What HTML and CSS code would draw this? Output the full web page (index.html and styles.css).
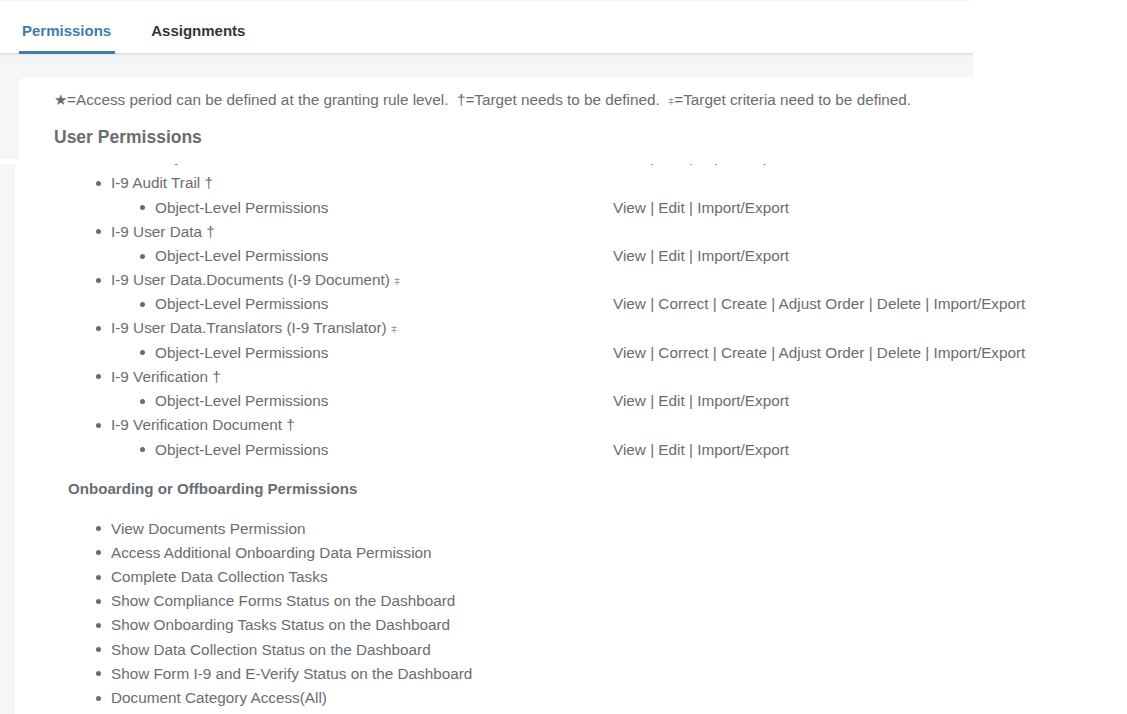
FILE: index.html
```html
<!DOCTYPE html>
<html lang="en">
<head>
<meta charset="utf-8">
<title>Permissions</title>
<link rel="stylesheet" href="styles.css">
</head>
<body>
<section class="top">
  <nav class="tabs">
    <div class="tab active">Permissions</div>
    <div class="tab">Assignments</div>
  </nav>
  <div class="card">
    <p class="legend">★=Access period can be defined at the granting rule level.&nbsp; †=Target needs to be defined.&nbsp; <span class="sym">⧧</span>=Target criteria need to be defined.</p>
    <h2 class="title">User Permissions</h2>
  </div>
</section>
<section class="lower">
  <div class="strip"></div>
  <div class="content">
    <div class="list">
      <div class="row l2 cut"><span class="label">Object-Level Permissions</span><span class="ops">View | Edit | Import/Export</span></div>
      <div class="row l1"><span class="label">I-9 Audit Trail †</span></div>
      <div class="row l2"><span class="label">Object-Level Permissions</span><span class="ops">View | Edit | Import/Export</span></div>
      <div class="row l1"><span class="label">I-9 User Data †</span></div>
      <div class="row l2"><span class="label">Object-Level Permissions</span><span class="ops">View | Edit | Import/Export</span></div>
      <div class="row l1"><span class="label">I-9 User Data.Documents (I-9 Document) <span class="sym">⧧</span></span></div>
      <div class="row l2"><span class="label">Object-Level Permissions</span><span class="ops">View | Correct | Create | Adjust Order | Delete | Import/Export</span></div>
      <div class="row l1"><span class="label">I-9 User Data.Translators (I-9 Translator) <span class="sym">⧧</span></span></div>
      <div class="row l2"><span class="label">Object-Level Permissions</span><span class="ops">View | Correct | Create | Adjust Order | Delete | Import/Export</span></div>
      <div class="row l1"><span class="label">I-9 Verification †</span></div>
      <div class="row l2"><span class="label">Object-Level Permissions</span><span class="ops">View | Edit | Import/Export</span></div>
      <div class="row l1"><span class="label">I-9 Verification Document †</span></div>
      <div class="row l2"><span class="label">Object-Level Permissions</span><span class="ops">View | Edit | Import/Export</span></div>
    </div>
    <h3 class="subtitle">Onboarding or Offboarding Permissions</h3>
    <div class="list plain">
      <div class="row l1"><span class="label">View Documents Permission</span></div>
      <div class="row l1"><span class="label">Access Additional Onboarding Data Permission</span></div>
      <div class="row l1"><span class="label">Complete Data Collection Tasks</span></div>
      <div class="row l1"><span class="label">Show Compliance Forms Status on the Dashboard</span></div>
      <div class="row l1"><span class="label">Show Onboarding Tasks Status on the Dashboard</span></div>
      <div class="row l1"><span class="label">Show Data Collection Status on the Dashboard</span></div>
      <div class="row l1"><span class="label">Show Form I-9 and E-Verify Status on the Dashboard</span></div>
      <div class="row l1"><span class="label">Document Category Access(All)</span></div>
    </div>
  </div>
</section>
</body>
</html>
```
FILE: styles.css
```css
html, body {
  margin: 0;
  padding: 0;
  background: #ffffff;
}
body {
  font-family: "Liberation Sans", Arial, sans-serif;
  font-size: 15.3px;
  color: #6a6d70;
  width: 1127px;
  height: 714px;
  overflow: hidden;
}

/* ---------- top section ---------- */
.top {
  width: 973px;
  height: 159px;
  background: #f5f6f7;
  overflow: hidden;
}
.tabs {
  display: flex;
  height: 54px;
  padding-left: 19px;
  background: #ffffff;
  border-top: 1px solid #f7f7f7;
  border-bottom: 1px solid #dadcde;
  box-shadow: 0 1px 3px rgba(0, 0, 0, 0.08);
  box-sizing: border-box;
  gap: 33px;
}
.tab {
  position: relative;
  padding: 20px 4px 0 3px;
  line-height: 20px;
  font-size: 15px;
  font-weight: bold;
  color: #32363a;
}
.tab.active {
  color: #427cac;
}
.tab.active::after {
  content: "";
  position: absolute;
  left: 0;
  right: 0;
  bottom: -1px;
  height: 3px;
  background: #427cac;
}
.card {
  margin: 23px 0 0 19px;
  height: 82px;
  background: #ffffff;
  border-top-left-radius: 8px;
  padding-left: 35px;
  overflow: hidden;
}
.legend {
  margin: 0;
  padding-top: 13px;
  line-height: 20px;
}
.sym {
  color: #9a9c9f;
  font-size: 12px;
  font-family: "DejaVu Sans", sans-serif;
}
.title {
  margin: 15px 0 0;
  font-size: 17.5px;
  line-height: 22px;
  font-weight: bold;
  color: #6a6d70;
}

/* ---------- lower section ---------- */
.lower {
  display: flex;
  margin-top: 5px;
  height: 550px;
}
.strip {
  width: 15px;
  flex: none;
  background: #f5f6f7;
}
.content {
  flex: 1;
  overflow: hidden;
  background: #ffffff;
}
.list {
  margin-top: -16.8px;
}
.list.plain {
  margin-top: 18px;
}
.row {
  display: flex;
  align-items: center;
  height: 24.2px;
  line-height: 20px;
  white-space: nowrap;
}
.row.cut {
  transform: translateY(-2px);
}
.row::before {
  content: "";
  flex: none;
  width: 5px;
  height: 5px;
  border-radius: 50%;
  background: #6a6d70;
  margin-right: 10px;
}
.row.l1 {
  padding-left: 81px;
}
.row.l2 {
  padding-left: 125px;
}
.row.l2 .label {
  width: 458px;
  flex: none;
}
.subtitle {
  margin: 17px 0 0 53px;
  font-size: 15.1px;
  line-height: 20px;
  font-weight: bold;
  color: #6a6d70;
}
```
